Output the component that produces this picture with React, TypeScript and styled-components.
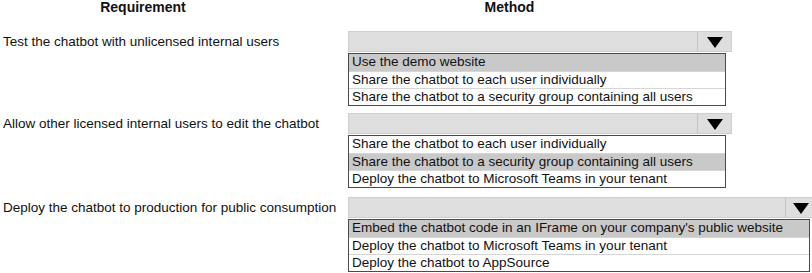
import React from "react";
import styled, { createGlobalStyle } from "styled-components";

const Global = createGlobalStyle`
  html, body { margin: 0; padding: 0; background: #ffffff; }
  body { font-family: "Liberation Sans", Arial, sans-serif; color: #111; }
`;

const Page = styled.div`
  width: 812px;
  height: 273px;
  overflow: hidden;
  display: flex;
  flex-direction: column;
`;

const Header = styled.div`
  display: grid;
  grid-template-columns: 286px 354px;
  height: 14px;
`;

const HeaderCell = styled.div<{ $offset?: number }>`
  font-weight: bold;
  font-size: 14px;
  line-height: 14px;
  text-align: center;
  margin-left: ${(p) => p.$offset ?? 0}px;
`;

const Rows = styled.div`
  display: flex;
  flex-direction: column;
  margin-top: 17px;
`;

const Row = styled.div<{ $gap: number }>`
  display: grid;
  grid-template-columns: 348px auto;
  margin-bottom: ${(p) => p.$gap}px;
`;

const Label = styled.div`
  font-size: 13.5px;
  line-height: 15px;
  padding-left: 3px;
  padding-top: 3px;
  white-space: nowrap;
`;

const Dropdown = styled.div<{ $width: number }>`
  display: flex;
  flex-direction: column;
  width: ${(p) => p.$width + 6}px;
`;

const Combo = styled.div`
  height: 19px;
  display: flex;
  background: #dedede;
  border: 1px solid #cfcfcf;
`;

const ComboField = styled.div`
  flex: 1;
`;

const ArrowButton = styled.div<{ $w: number }>`
  width: ${(p) => p.$w}px;
  border-left: 1px solid #c4c4c4;
  display: flex;
  align-items: center;
  justify-content: center;
`;

const Triangle = styled.div`
  width: 0;
  height: 0;
  border-left: 8px solid transparent;
  border-right: 8px solid transparent;
  border-top: 11px solid #000;
  margin-top: 2px;
`;

const List = styled.div<{ $width: number }>`
  margin-top: 1px;
  width: ${(p) => p.$width}px;
  box-sizing: border-box;
  border: 1px solid #4a4a4a;
  display: flex;
  flex-direction: column;
`;

const Item = styled.div<{ $selected?: boolean; $first?: boolean }>`
  height: 17px;
  box-sizing: border-box;
  font-size: 13.5px;
  line-height: 16px;
  padding-left: 3px;
  white-space: nowrap;
  background: ${(p) => (p.$selected ? "#c9c9c9" : "#ffffff")};
  border-top: ${(p) => (p.$first ? "none" : "1px solid #d6d6d6")};
`;

type Question = {
  label: string;
  width: number;
  arrow: number;
  gap: number;
  options: string[];
  selected: number;
};

const questions: Question[] = [
  {
    label: "Test the chatbot with unlicensed internal users",
    width: 378,
    arrow: 33,
    gap: 7,
    options: [
      "Use the demo website",
      "Share the chatbot to each user individually",
      "Share the chatbot to a security group containing all users",
    ],
    selected: 0,
  },
  {
    label: "Allow other licensed internal users to edit the chatbot",
    width: 378,
    arrow: 33,
    gap: 9,
    options: [
      "Share the chatbot to each user individually",
      "Share the chatbot to a security group containing all users",
      "Deploy the chatbot to Microsoft Teams in your tenant",
    ],
    selected: 1,
  },
  {
    label: "Deploy the chatbot to production for public consumption",
    width: 462,
    arrow: 29,
    gap: 0,
    options: [
      "Embed the chatbot code in an IFrame on your company's public website",
      "Deploy the chatbot to Microsoft Teams in your tenant",
      "Deploy the chatbot to AppSource",
    ],
    selected: 0,
  },
];

export default function App() {
  return (
    <Page>
      <Global />
      <Header>
        <HeaderCell>Requirement</HeaderCell>
        <HeaderCell $offset={93}>Method</HeaderCell>
      </Header>
      <Rows>
        {questions.map((q) => (
          <Row key={q.label} $gap={q.gap}>
            <Label>{q.label}</Label>
            <Dropdown $width={q.width}>
              <Combo>
                <ComboField />
                <ArrowButton $w={q.arrow}>
                  <Triangle />
                </ArrowButton>
              </Combo>
              <List $width={q.width}>
                {q.options.map((o, i) => (
                  <Item key={o} $selected={i === q.selected} $first={i === 0}>
                    {o}
                  </Item>
                ))}
              </List>
            </Dropdown>
          </Row>
        ))}
      </Rows>
    </Page>
  );
}
